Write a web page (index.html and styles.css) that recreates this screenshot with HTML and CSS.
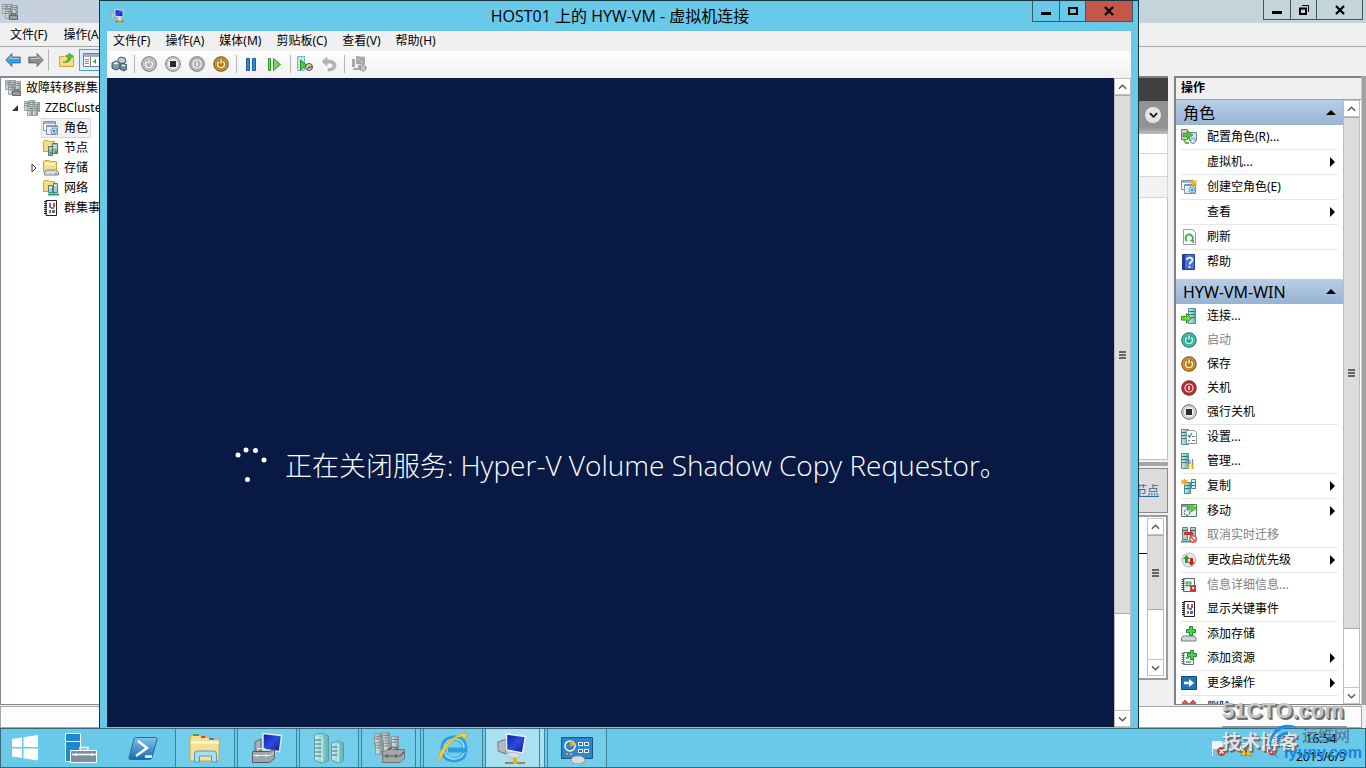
FILE: index.html
```html
<!DOCTYPE html>
<html lang="zh-CN">
<head>
    <meta charset="utf-8">
    <title>HOST01 上的 HYW-VM - 虚拟机连接</title>
    <link rel="stylesheet" href="styles.css">
</head>
<body>
    <!-- shared icons -->
    <svg class="sprite" aria-hidden="true">
        <defs>
            <linearGradient id="g-teal" x2="1"><stop offset="0" stop-color="#d5eff0"/><stop offset="1" stop-color="#5fb0b0"/></linearGradient>
            <linearGradient id="g-grey" x2="1"><stop offset="0" stop-color="#eee"/><stop offset="1" stop-color="#8d9898"/></linearGradient>
            <linearGradient id="g-screen" x2="1" y2="1"><stop offset="0" stop-color="#0a1aa0"/><stop offset=".5" stop-color="#2c4ce0"/><stop offset="1" stop-color="#0a1480"/></linearGradient>
            <linearGradient id="g-blue" x2="0" y2="1"><stop offset="0" stop-color="#7cc4ec"/><stop offset="1" stop-color="#1869b4"/></linearGradient>
        </defs>
        <symbol id="server" viewBox="0 0 6 10" preserveAspectRatio="none">
            <path d="M.5.5h5v9h-5z" fill="url(#g-grey)" stroke="#84918f" stroke-width=".8"/>
            <path d="M1 2.500h4M1 4.500h3" stroke="#677" stroke-width=".7"/><path d="M4 7h1v1H4z" fill="#2a9"/>
        </symbol>
        <symbol id="cluster" viewBox="0 0 16 16">
            <use href="#server" x="0" y="1" width="6" height="10"/><use href="#server" x="5" y="0" width="6" height="10"/>
            <use href="#server" x="10" y="2" width="6" height="10"/><use href="#server" x="3" y="6" width="6" height="10"/>
            <use href="#server" x="8" y="6" width="6" height="10"/>
        </symbol>
        <symbol id="cluster-tool" viewBox="0 0 16 16">
            <use href="#server" x="0" y="0" width="6" height="10"/><use href="#server" x="5" y="0" width="6" height="10"/>
            <use href="#server" x="10" y="1" width="6" height="10"/><use href="#server" x="3" y="5" width="6" height="10"/>
            <path d="M7.500 11.500h8v4h-8z" fill="#9aa0a0" stroke="#666"/><path d="M9.500 11V9.500h4V11" fill="none" stroke="#666"/>
        </symbol>
        <symbol id="roles" viewBox="0 0 16 16">
            <path d="M.5 1.500h12v9H.5z" fill="#fff" stroke="#8195a8"/><path d="M1 2h11v2H1z" fill="#9fb4c6"/>
            <path d="M3.500 5.500h11v9h-11z" fill="#e8f0f6" stroke="#8195a8"/><path d="M4 6h10v1H4z" fill="#7f99b0"/>
            <circle cx="11" cy="11" r="3" fill="#c7e0f4" stroke="#5d94c0" stroke-width="1.500" stroke-dasharray="1.500 .8"/><circle cx="11" cy="11" r="1.200" fill="#3f7cae"/>
        </symbol>
        <symbol id="roles-new" viewBox="0 0 16 16">
            <use href="#roles"/><path d="M12 0l1 2 3-1-1 3 1 2-3-.5-1.500 1.500-.5-2-2-1 2-1z" fill="#ffae1f"/>
        </symbol>
        <symbol id="nodes" viewBox="0 0 16 16">
            <path d="M.5 1.500l1-1h4l1 1h5v10H.5z" fill="#f5dd83" stroke="#c9a53b"/>
            <path d="M5.500 6.500h4v9h-4zM9.500 3.500h5v10h-5z" fill="#9cb3ab" stroke="#5d756c"/><path d="M10 5.500h4M10 7.500h4M6 8.500h3" stroke="#e6efe9"/><path d="M12 11h2v2h-2zM7 12h2v2H7z" fill="#2fa84a"/>
        </symbol>
        <symbol id="storage" viewBox="0 0 16 16">
            <path d="M.5 1.500l1-1h5l1 1h6v10H.5z" fill="#f5dd83" stroke="#c9a53b"/><path d="M2 4h10" stroke="#fff7cf" stroke-width="2"/>
            <path d="M3.500 10h9l3 2v3h-14v-3z" fill="#d7dada" stroke="#7b8282"/><path d="M12 13.500h2" stroke="#2fa84a"/>
        </symbol>
        <symbol id="network" viewBox="0 0 16 16">
            <path d="M.5 1.500l1-1h4l1 1h5v10H.5z" fill="#f5dd83" stroke="#c9a53b"/>
            <path d="M5.500 5.500h4v7h-4zM10.500 3.500h4v9h-4z" fill="#a8cfd2" stroke="#4e7f86"/><path d="M11 5.500h3M6 7.500h3" stroke="#fff"/>
            <path d="M5 14.500h11M10.500 12v3" stroke="#19a878" stroke-width="2"/>
        </symbol>
        <symbol id="events" viewBox="0 0 16 16">
            <path d="M3 .5h10.500v15H3z" fill="#fff" stroke="#222"/><path d="M2.500 1v14" stroke="#222" stroke-width="3" stroke-dasharray="1 1"/>
            <path d="M6 3h2v5H6zM8 7h3v2H8z" fill="#8b5fc0"/><path d="M10 3h2v4h-2zM6 10h2v3H6z" fill="#d04848"/><path d="M9 10h3v3H9z" fill="#5568a8"/>
        </symbol>
        <symbol id="arrow" viewBox="0 0 16 16">
            <path d="M.7 8L7 1.500V5h8.300v6H7v3.500z" fill="currentColor" stroke="#345" stroke-opacity=".6"/><path d="M3 7.500L6 4.500v2h8" fill="none" stroke="#fff" stroke-opacity=".5"/>
        </symbol>
        <symbol id="folder-up" viewBox="0 0 16 16">
            <path d="M.5 4.500h5l1-1h8v11H.5z" fill="#f5dd83" stroke="#c9a53b"/><path d="M4 10c4 0 5-2 5-5H7l3.500-4L14 5h-2c0 4-3 6-8 5z" fill="#5cc02f" stroke="#3d8f1e" stroke-width=".6"/>
        </symbol>
        <symbol id="panes" viewBox="0 0 18 16">
            <path d="M.5 1.500h17v13H.5z" fill="#fff" stroke="#77808a"/><path d="M1 2h16v3H1z" fill="#a4adb6"/><path d="M7.500 5v9" stroke="#77808a"/><path d="M2 7.500h4M2 9.500h4M2 11.500h4" stroke="#889"/><path d="M13 7v5l-3-2.500z" fill="#2da02d"/>
        </symbol>
        <symbol id="vmconnect" viewBox="0 0 16 16">
            <path d="M1 4h3v7H1z" fill="#c9cdd0" stroke="#888" stroke-width=".6"/><path d="M5 1.500l8 .8v6.500l-8-.5z" fill="url(#g-screen)" stroke="#d8dde2"/>
            <path d="M8 9h3v4H8z" fill="#ddd"/><path d="M5 13.500h9" stroke="#777" stroke-width="1.300"/><path d="M8.500 12h2.500v3H8.500z" fill="#e0ab2a"/>
        </symbol>
        <symbol id="cad" viewBox="0 0 16 16">
            <path d="M9 1l5 1 1 4-3 2-5-2V3z" fill="#b5ced8" stroke="#3f5c68"/><path d="M1 7l4-2 4 2v5l-4 2-4-2z" fill="#7e9ba6" stroke="#3a545f"/><path d="M9 9l3-2 4 2v4l-3 2-4-2z" fill="#6d8c98" stroke="#344e59"/><path d="M2 7.500l3 1 3-1.500-3-1z" fill="#e5f1f5"/><path d="M10 9.500l3 1 2-1-3-1z" fill="#e5f1f5"/>
        </symbol>
        <symbol id="power" viewBox="0 0 16 16">
            <circle cx="8" cy="8" r="7.500" fill="currentColor" stroke="#000" stroke-opacity=".35"/><circle cx="8" cy="8" r="5.800" fill="none" stroke="#fff" stroke-opacity=".25"/>
            <path d="M5.800 5.500a3.500 3.500 0 1 0 4.400 0M8 3.500v4" fill="none" stroke="#fff" stroke-width="1.300"/>
        </symbol>
        <symbol id="shutdown" viewBox="0 0 16 16">
            <circle cx="8" cy="8" r="7.500" fill="currentColor" stroke="#000" stroke-opacity=".35"/>
            <circle cx="8" cy="8" r="4" fill="none" stroke="#fff" stroke-opacity=".85" stroke-width="1.200"/><path d="M8 6v4" stroke="#fff" stroke-width="1.400"/>
        </symbol>
        <symbol id="turnoff" viewBox="0 0 16 16">
            <circle cx="8" cy="8" r="7.300" fill="#ececec" stroke="#666"/><circle cx="8" cy="8" r="5.700" fill="none" stroke="#bbb"/><path d="M5 5h6v6H5z" fill="#2b2b2b"/>
        </symbol>
        <symbol id="pause" viewBox="0 0 16 16"><path d="M3.500 2.500h3v12h-3zM9.500 2.500h3v12h-3z" fill="#2f86d2" stroke="#1761a4"/></symbol>
        <symbol id="play" viewBox="0 0 16 16"><path d="M1.500 2.500h2v12h-2zM6.500 2.500v12l7-6z" fill="#6fd85c" stroke="#2a9c27"/></symbol>
        <symbol id="snapshot" viewBox="0 0 16 16">
            <path d="M.5.500h7v14h-7z" fill="#bfe6e8" stroke="#4f9a9f" stroke-dasharray="2 1"/><path d="M3.500 4v10l6-5z" fill="#4fcb42" stroke="#25902a"/><circle cx="12" cy="11" r="3.500" fill="#d8cfb8" stroke="#594f3c"/><path d="M12 11h3M12 11l-1.500 2" stroke="#222"/>
        </symbol>
        <symbol id="revert" viewBox="0 0 16 16"><path d="M1 5.500L6 1v3c6 0 9 2 9 5.500S12 15 7 15v-2.500c3 0 5-1 5-3S9 7 6 7v3z" fill="#b4b4b4" stroke="#9a9a9a" stroke-width=".5"/></symbol>
        <symbol id="enhanced" viewBox="0 0 16 16"><path d="M5 0l9 1v8l-9-1zM1 3h3v8H1z" fill="#a8a8a8"/><path d="M6 2l6 5" stroke="#c8c8c8"/><path d="M7 9h3v3H7zM2 12h9v2H2z" fill="#aaa"/><circle cx="12" cy="12" r="2.800" fill="#c4c4c4" stroke="#929292" stroke-width="1.500" stroke-dasharray="2 1"/></symbol>
        <symbol id="configure" viewBox="0 0 16 16">
            <path d="M.5.500h6v10h-6z" fill="#cfd8cf" stroke="#6a7b6a"/><path d="M8.500 3.500h7v8h-7z" fill="#cfe0ee" stroke="#6a87a0"/><path d="M2 4h5V2l5 4-5 4V8H2z" fill="#56c13e" stroke="#2c8a22" stroke-width=".6"/><path d="M3 11l2 3h3" fill="none" stroke="#56c13e" stroke-width="2"/><circle cx="12" cy="12" r="2.500" fill="#e4eef5" stroke="#6a87a0"/>
        </symbol>
        <symbol id="refresh" viewBox="0 0 16 16">
            <path d="M2.500.500h9l3 3v12h-12z" fill="#fff" stroke="#9a9a9a"/><path d="M6 12a3.600 3.600 0 1 1 5-.5" fill="none" stroke="#47b04a" stroke-width="2"/><path d="M8.500 11h4.500v3.500z" fill="#47b04a"/>
        </symbol>
        <symbol id="help" viewBox="0 0 16 16">
            <path d="M1.500.500h12v15h-12z" fill="#4a70d8" stroke="#23408f"/><path d="M2 1h2v14H2z" fill="#1f3c94"/><path d="M6 6c0-3.500 5.500-3 5.500 0 0 2-3 2-3 4.500M8.500 12v1.800" fill="none" stroke="#fff" stroke-width="1.700"/>
        </symbol>
        <symbol id="host" viewBox="0 0 16 16">
            <path d="M.5.500h7v15h-7z" fill="url(#g-teal)" stroke="#4c9299"/><path d="M1 3.500h6M1 6.500h6M1 9.500h6" stroke="#2f7a86"/>
        </symbol>
        <symbol id="connect" viewBox="0 0 16 16"><use href="#host" x="7"/><path d="M.5 8.500h5v-3l5 4.800-5 4.800v-3h-5z" fill="#6fdd2f" stroke="#2f9322"/></symbol>
        <symbol id="settings" viewBox="0 0 16 16"><use href="#host"/><path d="M5.500 1.500h8l2 2v11h-10z" fill="#fff" stroke="#8e9aa3"/><path d="M7 6l1.500 2L11 4" fill="none" stroke="#1c9a86" stroke-width="1.300"/><path d="M11 7.500h3M7 11.500h2M11 11.500h3" stroke="#678"/></symbol>
        <symbol id="manage" viewBox="0 0 16 16"><use href="#host"/><path d="M6 7v3l1.500 1v5M9 7v3l-1.500 1" fill="none" stroke="#8b9196" stroke-width="1.300"/><path d="M7.500 11v5" stroke="#e3a71c" stroke-width="1.500"/><path d="M11.500 6v5" stroke="#888" stroke-width="1.300"/><path d="M11.500 10v6" stroke="#e3a71c" stroke-width="2"/></symbol>
        <symbol id="replicate" viewBox="0 0 16 16"><path d="M3.500 4.500h6v11h-6z" fill="url(#g-teal)" stroke="#3d8d96"/><path d="M10.500 1.500h4v9h-4z" fill="#d4eef2" stroke="#3d8d96"/><path d="M4 7.500h5M4 10.500h5M11 4.500h3M11 7.500h3" stroke="#2f7a86"/><path d="M3.500 0l1 2.500 2.500-1-1 2.500L7 6 4.500 5.500 3.500 8 2.500 5.500 0 6l1-2-1-2.500 2.500 1z" fill="#f3a52a"/></symbol>
        <symbol id="move" viewBox="0 0 16 16"><path d="M.5 1.500h15v12H.5z" fill="#e9f1f0" stroke="#527a6a"/><path d="M1 2h8v2H1z" fill="#7fa294"/><path d="M6 4h4V1l6 4-6 4V6.500H6z" fill="#62cf3b" stroke="#2d8f20" stroke-width=".6"/><circle cx="6" cy="9.500" r="2.700" fill="#fff" stroke="#4f86b3" stroke-dasharray="2 1" stroke-width="1.500"/></symbol>
        <symbol id="cancel-move" viewBox="0 0 16 16"><path d="M1.500.500h5v12h-5zM9.500.500h5v12h-5z" fill="#b6cdd2" stroke="#5e7a80"/><path d="M2 3.500h4M10 3.500h4" stroke="#455"/><path d="M0 14.500h10" stroke="#2f9a7a" stroke-width="2"/><path d="M3 5h6V3l4 3.500L9 10V8H3z" fill="#c9362c"/><circle cx="12" cy="12" r="3.200" fill="#fff" stroke="#d8554a" stroke-width="1.500"/><path d="M10 10l4 4" stroke="#d8554a" stroke-width="1.500"/></symbol>
        <symbol id="priority" viewBox="0 0 16 16"><circle cx="8" cy="8" r="7" fill="#e5e7e8" stroke="#b4b8ba"/><path d="M2 7l3.500-4L9 7H7v4H4V7z" fill="#27a03a"/><path d="M7 10l3.500 4 3.500-4h-2V6H9v4z" fill="#c6281f"/></symbol>
        <symbol id="info" viewBox="0 0 16 16"><path d="M2.500 1.500h11v13h-11z" fill="#f3f6f3" stroke="#567"/><path d="M2 2v12" stroke="#345" stroke-width="3" stroke-dasharray="1 1"/><path d="M6 4v6M9 4v6M4 6h7M4 8.500h7" stroke="#39ad45" stroke-width="1.200"/><path d="M9 8h6v7H9z" fill="#cc3d46"/><path d="M11 10h2v2h-2z" fill="#fff"/></symbol>
        <symbol id="add-storage" viewBox="0 0 16 16"><path d="M2 10h11l2 2v3H.5v-3z" fill="#d3d6d6" stroke="#777e7e"/><path d="M8.500.500h3v3h3v3h-3v3h-3v-3h-3v-3h3z" fill="#4fd14b" stroke="#1e8c28"/></symbol>
        <symbol id="add-resource" viewBox="0 0 16 16"><path d="M2.500 2.500h10v12h-10z" fill="#edf5f3" stroke="#567a78"/><path d="M2 3v11" stroke="#357a78" stroke-width="3" stroke-dasharray="1 1"/><path d="M5 7l1.500 2L8 6M5 12h5" fill="none" stroke="#265" /><path d="M9.500.500h3v3h3v3h-3v3h-3v-3h-3v-3h3z" fill="#4fd14b" stroke="#1e8c28"/></symbol>
        <symbol id="more" viewBox="0 0 16 16"><path d="M.5 1.500h15v13H.5z" fill="#2174b4" stroke="#124a7c"/><path d="M3 6.700h5V4l5 4-5 4V9.300H3z" fill="#fff"/></symbol>
        <symbol id="remove" viewBox="0 0 16 16"><path d="M1 3l3-3 4 4 4-4 3 3-4 5 4 5-3 3-4-4-4 4-3-3 4-5z" fill="#d9534a" stroke="#a83028" stroke-width=".6"/></symbol>
        <symbol id="chev-up" viewBox="0 0 10 6"><path d="M1 5l4-4 4 4" fill="none" stroke="#555" stroke-width="1.500"/></symbol>
        <symbol id="chev-down" viewBox="0 0 10 6"><path d="M1 1l4 4 4-4" fill="none" stroke="#555" stroke-width="1.500"/></symbol>
        <symbol id="chev-bold" viewBox="0 0 10 6"><path d="M1 1l4 4 4-4" fill="none" stroke="#111" stroke-width="2"/></symbol>
        <symbol id="win-min" viewBox="0 0 10 10"><path d="M0 6h10v3H0z" fill="#000"/></symbol>
        <symbol id="win-max" viewBox="0 0 10 10"><path d="M1 2h8v6H1z" fill="none" stroke="#000" stroke-width="2"/></symbol>
        <symbol id="win-restore" viewBox="0 0 10 10"><path d="M1 3.500h6V9H1z" fill="none" stroke="#000" stroke-width="2"/><path d="M3 .5h6.500V7" fill="none" stroke="#000"/></symbol>
        <symbol id="win-close" viewBox="0 0 10 10"><path d="M1 1l8 8M9 1L1 9" stroke="#000" stroke-width="2.300"/></symbol>
    </svg>

    <main class="desktop">
        <section class="console">
            <header class="console-title">
                <svg class="icon"><use href="#cluster-tool"/></svg>
                <div class="win-buttons">
                    <button class="win-btn" aria-label="最小化"><svg><use href="#win-min"/></svg></button>
                    <button class="win-btn mid" aria-label="还原"><svg><use href="#win-restore"/></svg></button>
                    <button class="win-btn close" aria-label="关闭"><svg><use href="#win-close"/></svg></button>
                </div>
            </header>
            <nav class="menu console-menu">
                <button>文件(F)</button>
                <button>操作(A)</button>
            </nav>
            <div class="console-tools">
                <button class="tool back" aria-label="后退"><svg class="icon"><use href="#arrow"/></svg></button>
                <button class="tool forward" aria-label="前进"><svg class="icon"><use href="#arrow"/></svg></button>
                <span class="tool-sep"></span>
                <button class="tool" aria-label="上一级"><svg class="icon"><use href="#folder-up"/></svg></button>
                <button class="tool toggled" aria-label="显示树"><svg class="icon"><use href="#panes"/></svg></button>
            </div>

            <div class="console-body">
                <ul class="tree">
                    <li><svg class="icon"><use href="#cluster-tool"/></svg><span>故障转移群集管理器</span></li>
                    <li class="level-1"><svg class="twisty" viewBox="0 0 8 8"><path d="M7 1v6H1z" fill="#333"/></svg><svg class="icon"><use href="#cluster"/></svg><span>ZZBCluster</span></li>
                    <li class="level-2"><span class="selected"><svg class="icon"><use href="#roles"/></svg><span>角色</span></span></li>
                    <li class="level-2"><svg class="icon"><use href="#nodes"/></svg><span>节点</span></li>
                    <li class="level-2 expandable"><svg class="twisty" viewBox="0 0 8 8"><path d="M2 0v8l4-4z" fill="#fff" stroke="#333"/></svg><svg class="icon"><use href="#storage"/></svg><span>存储</span></li>
                    <li class="level-2"><svg class="icon"><use href="#network"/></svg><span>网络</span></li>
                    <li class="level-2"><svg class="icon"><use href="#events"/></svg><span>群集事件</span></li>
                </ul>

                <div class="center">
                    <div class="center-head"></div>
                    <div class="center-filter"><button class="round" aria-label="展开"><svg><use href="#chev-bold"/></svg></button></div>
                    <div class="grid-row"></div>
                    <div class="grid-row tall"></div>
                    <div class="grid-row shaded"></div>
                    <div class="grid-rest"></div>
                    <div class="splitter"></div>
                    <div class="owner"><a href="#">节点</a></div>
                    <div class="details">
                        <div class="details-line"></div>
                        <div class="scroll">
                            <button aria-label="向上"><svg><use href="#chev-up"/></svg></button>
                            <div class="thumb"></div>
                            <div class="track"></div>
                            <button aria-label="向下"><svg><use href="#chev-down"/></svg></button>
                        </div>
                    </div>
                </div>

                <aside class="actions">
                    <h2>操作</h2>
                    <div class="actions-body">
                        <div class="actions-list">
                            <h3>角色<i class="fold"></i></h3>
                            <button class="action line"><svg class="icon"><use href="#configure"/></svg>配置角色(R)...</button>
                            <button class="action line more"><svg class="icon"></svg>虚拟机...</button>
                            <button class="action line"><svg class="icon"><use href="#roles-new"/></svg>创建空角色(E)</button>
                            <button class="action line more"><svg class="icon"></svg>查看</button>
                            <button class="action line"><svg class="icon"><use href="#refresh"/></svg>刷新</button>
                            <button class="action last"><svg class="icon"><use href="#help"/></svg>帮助</button>
                            <h3>HYW-VM-WIN<i class="fold"></i></h3>
                            <button class="action"><svg class="icon"><use href="#connect"/></svg>连接...</button>
                            <button class="action" disabled><svg class="icon start"><use href="#power"/></svg>启动</button>
                            <button class="action"><svg class="icon save"><use href="#power"/></svg>保存</button>
                            <button class="action"><svg class="icon stop"><use href="#shutdown"/></svg>关机</button>
                            <button class="action line"><svg class="icon"><use href="#turnoff"/></svg>强行关机</button>
                            <button class="action"><svg class="icon"><use href="#settings"/></svg>设置...</button>
                            <button class="action line"><svg class="icon"><use href="#manage"/></svg>管理...</button>
                            <button class="action line more"><svg class="icon"><use href="#replicate"/></svg>复制</button>
                            <button class="action more"><svg class="icon"><use href="#move"/></svg>移动</button>
                            <button class="action line" disabled><svg class="icon"><use href="#cancel-move"/></svg>取消实时迁移</button>
                            <button class="action line more"><svg class="icon"><use href="#priority"/></svg>更改启动优先级</button>
                            <button class="action" disabled><svg class="icon"><use href="#info"/></svg>信息详细信息...</button>
                            <button class="action line"><svg class="icon"><use href="#events"/></svg>显示关键事件</button>
                            <button class="action"><svg class="icon"><use href="#add-storage"/></svg>添加存储</button>
                            <button class="action line more"><svg class="icon"><use href="#add-resource"/></svg>添加资源</button>
                            <button class="action line more"><svg class="icon"><use href="#more"/></svg>更多操作</button>
                            <button class="action"><svg class="icon"><use href="#remove"/></svg>删除</button>
                        </div>
                        <div class="scroll">
                            <button aria-label="向上"><svg><use href="#chev-up"/></svg></button>
                            <div class="thumb"></div>
                            <div class="track"></div>
                            <button aria-label="向下"><svg><use href="#chev-down"/></svg></button>
                        </div>
                    </div>
                </aside>
            </div>
            <footer class="console-status"></footer>
        </section>

        <section class="vm">
            <header class="vm-title">
                <svg class="icon"><use href="#vmconnect"/></svg>
                <h1>HOST01 上的 HYW-VM - 虚拟机连接</h1>
                <div class="win-buttons">
                    <button class="win-btn" aria-label="最小化"><svg><use href="#win-min"/></svg></button>
                    <button class="win-btn mid" aria-label="最大化"><svg><use href="#win-max"/></svg></button>
                    <button class="win-btn close" aria-label="关闭"><svg><use href="#win-close"/></svg></button>
                </div>
            </header>
            <nav class="menu vm-menu">
                <button>文件(F)</button>
                <button>操作(A)</button>
                <button>媒体(M)</button>
                <button>剪贴板(C)</button>
                <button>查看(V)</button>
                <button>帮助(H)</button>
            </nav>
            <div class="vm-tools">
                <button class="tool" aria-label="Ctrl+Alt+Del"><svg class="icon"><use href="#cad"/></svg></button>
                <span class="tool-sep"></span>
                <button class="tool off" aria-label="启动"><svg class="icon"><use href="#power"/></svg></button>
                <button class="tool" aria-label="强行关机"><svg class="icon"><use href="#turnoff"/></svg></button>
                <button class="tool off" aria-label="关机"><svg class="icon"><use href="#shutdown"/></svg></button>
                <button class="tool save" aria-label="保存"><svg class="icon"><use href="#power"/></svg></button>
                <span class="tool-sep"></span>
                <button class="tool" aria-label="暂停"><svg class="icon"><use href="#pause"/></svg></button>
                <button class="tool" aria-label="重置"><svg class="icon"><use href="#play"/></svg></button>
                <span class="tool-sep"></span>
                <button class="tool" aria-label="快照"><svg class="icon"><use href="#snapshot"/></svg></button>
                <button class="tool" aria-label="还原"><svg class="icon"><use href="#revert"/></svg></button>
                <span class="tool-sep"></span>
                <button class="tool" aria-label="增强会话"><svg class="icon"><use href="#enhanced"/></svg></button>
            </div>
            <div class="vm-view">
                <div class="vm-screen">
                    <svg class="spinner" viewBox="0 0 36 40">
                        <g fill="#fff"><circle cx="4" cy="9" r="2.500"/><circle cx="12" cy="4" r="2.500"/><circle cx="21.500" cy="4.500" r="2.500"/><circle cx="30" cy="14" r="2.500"/><circle cx="13.500" cy="33.500" r="2.500"/></g>
                    </svg>
                    <p>正在关闭服务: <span>Hyper-V Volume Shadow Copy Requestor</span>。</p>
                </div>
                <div class="scroll">
                    <button aria-label="向上"><svg><use href="#chev-up"/></svg></button>
                    <div class="thumb"></div>
                    <div class="track"></div>
                    <button aria-label="向下"><svg><use href="#chev-down"/></svg></button>
                </div>
            </div>
        </section>
    </main>

    <footer class="taskbar">
        <button class="task start-btn" aria-label="开始">
            <svg viewBox="0 0 32 32"><path d="M3 7l10-1.500V15H3zM14.500 5.300L29 3v12H14.500zM3 16.500h10V26L3 24.500zM14.500 16.500H29v12l-14.500-2.200z" fill="#fff"/></svg>
        </button>
        <button class="task pinned" aria-label="服务器管理器">
            <svg viewBox="0 0 32 32"><path d="M.5 1.500h15v28H.5z" fill="#1f86d0" stroke="#fff"/><path d="M1 9.500h14" stroke="#fff"/><path d="M5.500 18.500h26v12h-26z" fill="#7b8f9d" stroke="#fff"/><path d="M15 18v-2.500h8V18M7 22.500h24M11 21v3M27 21v3" fill="none" stroke="#fff" stroke-width="1.300"/></svg>
        </button>
        <button class="task pinned" aria-label="PowerShell">
            <svg viewBox="0 0 32 32"><path d="M8.500 5.500h20q2 0 1.500 2l-5 18q-.5 2-2.500 2h-19q-2 0-1.500-2l5-18q.5-2 1.500-2z" fill="url(#g-blue)" stroke="#2a6d9f"/><path d="M11 9l9 7-11 8M18 24.500h7" fill="none" stroke="#fff" stroke-width="2.500"/></svg>
        </button>
        <button class="task open" aria-label="文件资源管理器">
            <svg viewBox="0 0 32 32"><path d="M1 6l2-3h8l2 2h8l2 2h7v22H1z" fill="#f6df92" stroke="#c8a546"/><path d="M4 3h6" stroke="#3da943" stroke-width="2"/><path d="M12 5h4" stroke="#d8432e" stroke-width="2"/><path d="M20 7h5" stroke="#3f87cc" stroke-width="2"/><path d="M2 10.500h28" stroke="#fff8d6" stroke-width="2"/><path d="M5.500 30v-8q0-3 3-3h16q3 0 3 3v8h-5v-6h-12v6z" fill="#a7dff2" stroke="#4a9dc0"/></svg>
        </button>
        <button class="task open" aria-label="Hyper-V 管理器">
            <svg viewBox="0 0 32 32"><path d="M4 10l6-3v12H4z" fill="#a9aeb2" stroke="#666"/><path d="M12 1.500l18.500 2-2 16-16.500-2z" fill="url(#g-screen)" stroke="#e2e6ea" stroke-width="1.500"/><path d="M13 18l12 2v5H13z" fill="#c6cacc"/><path d="M1.500 19.500h17l5-2v9l-5 4h-17z" fill="#9ea4a8" stroke="#555d62"/><path d="M7 19v-2.500h7V19M2 23.500h17l4-3M6 22v3M15 22v3" fill="none" stroke="#eee"/></svg>
        </button>
        <button class="task open" aria-label="服务器">
            <svg viewBox="0 0 32 32"><path d="M1.500 3l8-2 6 3v25l-7 2-7-3z" fill="url(#g-teal)" stroke="#5c9ea6"/><path d="M18.500 11l7-2 5 2v18l-6 2-6-3z" fill="url(#g-teal)" stroke="#5c9ea6"/><path d="M2 8h7M2 12h7M2 16h7M2 20h7M2 24h7M19 15h6M19 19h6M19 23h6" stroke="#2f7e8a"/><path d="M9 5v25M25 12v18" stroke="#e8fafa"/></svg>
        </button>
        <button class="task open stacked" aria-label="故障转移群集管理器">
            <svg viewBox="0 0 32 32"><use href="#server" x="1" y="1" width="8" height="13"/><use href="#server" x="9" y="0" width="8" height="13"/><use href="#server" x="18" y="4" width="8" height="14"/><use href="#server" x="2" y="10" width="8" height="13"/><use href="#server" x="10" y="8" width="8" height="13"/><path d="M9.500 20.500l5-3h17v9l-5 4h-17z" fill="#a3a8ab" stroke="#6f767a"/><path d="M15 18q5-6 10 0M10 24h17l4-4M14 22v4M23 22v4" fill="none" stroke="#555" stroke-width="1.200"/></svg>
        </button>
        <button class="task open" aria-label="Internet Explorer">
            <svg viewBox="0 0 32 32"><path d="M28 21q-3 7-11 7Q6 27 6 17T17 6q11 0 11 12H11" fill="none" stroke="#2b9fe0" stroke-width="5"/><path d="M27 21q-3 6-10 6-10-1-10-10T17 7q10 0 10 9" fill="none" stroke="#a8e2fb" stroke-width="1.500"/><path d="M3 30Q-2 25 9 12 22 0 28 1q3 2 0 7-1-4-6-3Q13 9 7 20q-4 8-4 10z" fill="#f5cf3a" stroke="#c79d1b" stroke-width=".6"/></svg>
        </button>
        <button class="task open active stacked" aria-label="虚拟机连接">
            <svg viewBox="0 0 32 32"><path d="M1 10l8-3v15l-8-3z" fill="#b4b9bc" stroke="#777"/><path d="M9.500 2l19 2.500-3 16.500-16-3z" fill="url(#g-screen)" stroke="#eceff1" stroke-width="1.500"/><path d="M10 21q7-2 14 1-1 4-7 4-6 0-7-5z" fill="#d9dcde" stroke="#a9adb0" stroke-width=".6"/><path d="M8 31h20" stroke="#8a6d1a" stroke-width="1.500"/><path d="M16 26h4v6h-4z" fill="#eab12c"/></svg>
        </button>
        <button class="task open" aria-label="控制面板">
            <svg viewBox="0 0 32 32"><path d="M.500 5.500h31v21H.5z" fill="#2f86c8" stroke="#165585"/><circle cx="9" cy="14" r="5" fill="none" stroke="#fff" stroke-width="1.500"/><path d="M9 14V9a5 5 0 0 1 5 5z" fill="#f5a623"/><path d="M17.500 10.500h4v3h-4zM23.500 10.500h4v3h-4zM17.500 17.500h4v3h-4zM23.500 17.500h4v3h-4z" fill="#1c6cab" stroke="#fff"/><path d="M5 22h2M9 22h2" stroke="#f5a623" stroke-width="2"/><ellipse cx="17" cy="28" rx="7" ry="4" fill="#d8dcdf" stroke="#8f979c"/></svg>
        </button>

        <div class="tray">
            <svg class="icon" viewBox="0 0 16 16"><path d="M1.500 1v15M2 1.500h9v7H2" fill="#e8f6fc" stroke="#fff"/><circle cx="10.500" cy="11.500" r="4.500" fill="#d8362c"/><path d="M8.500 9.500l4 4M12.500 9.500l-4 4" stroke="#fff" stroke-width="1.300"/></svg>
            <svg class="icon" viewBox="0 0 16 16"><path d="M4.500 3.500h10v7h-10zM1.500 1.500v8M8 13h5" fill="#8fd2ee" stroke="#fff"/><path d="M10 6l5.500 9.500h-11z" fill="#f7c51e" stroke="#a37c09" stroke-width=".6"/><path d="M10 9v3.500M10 13.500v1" stroke="#222" stroke-width="1.300"/></svg>
            <svg class="icon" viewBox="0 0 16 16"><path d="M1 6h3l4-4v12l-4-4H1z" fill="#fff"/><circle cx="11.500" cy="11" r="4.500" fill="#d8362c"/><path d="M9.500 9l4 4M13.500 9l-4 4" stroke="#fff" stroke-width="1.300"/></svg>
            <div class="clock"><time>16:54</time><span>2015/6/9</span></div>
        </div>
    </footer>

    <div class="marks">
        <div class="mark-cto"><b>51CTO.com</b><span>技术博客</span></div>
        <svg class="mark-ring" viewBox="0 0 40 40"><path d="M36 7A18 18 0 1 0 18 38Q4 26 12 15 20 4 36 7z" fill="#1d8fe0"/><path d="M16 21q0-8 10-9" fill="none" stroke="#1d8fe0" stroke-width="3"/></svg>
        <div class="mark-iyunv"><span>运维网</span><b>iyunv.com</b></div>
    </div>
</body>
</html>
```
FILE: styles.css
```css
* {
    box-sizing: border-box;
}

body {
    margin: 0;
    height: 100vh;
    display: flex;
    flex-direction: column;
    overflow: hidden;
    position: relative;
    font-family: "Noto Sans", "Noto Sans CJK SC", sans-serif;
    font-size: 12px;
    line-height: 16px;
    color: #000;
    background-color: #68c9e9;
}

button {
    font: inherit;
    color: inherit;
    background: none;
    border: 0;
    padding: 0;
}

h1, h2, h3, p, ul {
    margin: 0;
    padding: 0;
    font-weight: normal;
}

.sprite {
    position: absolute;
    width: 0;
    height: 0;
}

.icon {
    width: 16px;
    height: 16px;
    flex: none;
    display: block;
}

.desktop {
    flex: 1;
    min-height: 0;
    position: relative;
    display: flex;
}

/* window buttons */
.win-buttons {
    display: flex;
    align-self: flex-start;
}

.win-btn {
    width: 28px;
    height: 20px;
    border: 1px solid #42565e;
    border-top: 0;
    display: flex;
    align-items: center;
    justify-content: center;
}

.win-btn svg {
    width: 10px;
    height: 10px;
}

.win-btn.mid {
    width: 26px;
    border-left: 0;
}

.win-btn.close {
    width: 46px;
    border-left: 0;
}

.menu {
    display: flex;
    align-items: center;
    background-color: #f0f0f0;
}

.tool-sep {
    width: 1px;
    height: 18px;
    background-color: #b5b5b5;
}

/* scrollbars */
.scroll {
    width: 17px;
    flex: none;
    display: flex;
    flex-direction: column;
    background-color: #fff;
    border: solid #bcbcbc;
    border-width: 0 1px;
}

.scroll button {
    height: 17px;
    flex: none;
    display: flex;
    align-items: center;
    justify-content: center;
    border: 1px solid #c4c4c4;
    border-width: 1px 0;
}

.scroll svg {
    width: 9px;
    height: 6px;
}

.thumb {
    flex: 54;
    background-color: #dcdcdc;
    border: 1px solid #aaa;
    border-width: 1px 0;
    display: flex;
    align-items: center;
    justify-content: center;
}

.thumb::before {
    content: "";
    width: 7px;
    height: 8px;
    background: repeating-linear-gradient(#666 0 2px, transparent 2px 3px);
}

.track {
    flex: 10;
}

/* cluster console */
.console {
    flex: 1;
    display: flex;
    flex-direction: column;
    min-width: 0;
    background-color: #f0f0f0;
}

.console-title {
    height: 23px;
    display: flex;
    justify-content: space-between;
    align-items: center;
    padding: 0 3px 0 2px;
    background: linear-gradient(90deg, #c6d0de, #c3d5da);
}

.console-menu {
    height: 24px;
    padding: 0 10px;
    gap: 16px;
    border-bottom: 1px solid #a6a6a6;
}

.console-tools {
    height: 29px;
    display: flex;
    align-items: center;
    padding: 0 5px 3px;
    gap: 7px;
}

.console-tools .tool-sep {
    height: 22px;
    margin: 0 3px 0 -3px;
}

.back {
    color: #35a0e8;
}

.forward {
    color: #8d8d8d;
    transform: scaleX(-1);
}

.toggled {
    height: 22px;
    padding: 2px 3px;
    margin-left: -3px;
    border: 1px solid #4aa3d8;
    background-color: #d9ecf7;
}

.toggled .icon {
    width: 18px;
}

.console-body {
    flex: 1;
    min-height: 0;
    display: flex;
    border-right: 4px solid #a2a2a2;
}

.tree {
    width: 240px;
    flex: none;
    list-style: none;
    background-color: #fff;
    border: 1px solid #828790;
    border-width: 2px 1px 1px;
}

.tree li {
    height: 20px;
    display: flex;
    align-items: center;
    gap: 5px;
    padding-left: 4px;
    white-space: nowrap;
}

.twisty {
    width: 8px;
    height: 8px;
}

.tree .level-1 {
    padding-left: 10px;
}

.tree .level-2 {
    padding-left: 42px;
}

.tree .expandable {
    padding-left: 29px;
}

.selected {
    display: flex;
    align-items: center;
    gap: 5px;
    height: 20px;
    margin-left: -2px;
    padding: 0 2px 0 1px;
    background-color: #f2f2f2;
    border: 1px solid #dadada;
}

/* middle pane, mostly hidden behind the vm window */
.center {
    flex: 1;
    display: flex;
    flex-direction: column;
    margin-right: 6px;
    border-top: 2px solid #828282;
}

.center-head {
    height: 23px;
    background-color: #404040;
}

.center-filter {
    height: 33px;
    display: flex;
    justify-content: flex-end;
    align-items: center;
    padding: 0 7px 6px;
    background: linear-gradient(#929292 80%, #bdbdbd);
}

.round {
    width: 16px;
    height: 16px;
    border-radius: 50%;
    background-color: #e4e4e4;
    display: flex;
    align-items: center;
    justify-content: center;
}

.round svg {
    width: 9px;
    height: 6px;
}

.grid-row {
    height: 20px;
    background-color: #fff;
    border: 1px solid #d5d5d5;
    border-width: 0 1px 1px 0;
}

.grid-row.tall {
    height: 23px;
}

.grid-row.shaded {
    height: 21px;
    background-color: #f2f2f2;
}

.grid-rest {
    flex: 1;
    background-color: #fff;
    border: 1px solid #c0c0c0;
    border-width: 0 1px 1px 0;
}

.splitter {
    height: 4px;
    margin: 2px 0;
    background-color: #a5a5a5;
}

.owner {
    height: 45px;
    display: flex;
    align-items: center;
    justify-content: flex-end;
    padding-right: 8px;
    background-color: #dcdcdc;
    border: 1px solid #8a8a8a;
}

.owner a {
    color: #2a6ab0;
}

.details {
    height: 165px;
    margin: 2px 0 25px;
    padding: 1px 2px 2px 1px;
    display: flex;
    background-color: #fff;
    border: 2px solid #9a9aa2;
}

.details-line {
    flex: 1;
    height: 36px;
    border-bottom: 1px solid #000;
}

.details .thumb {
    flex: 3;
}

.details .track {
    flex: 2;
}

/* actions pane */
.actions {
    width: 188px;
    flex: none;
    display: flex;
    flex-direction: column;
    background-color: #fff;
    border: 2px solid #828282;
    border-right: 1px solid #c8c8c8;
    border-bottom: 1px solid #828282;
}

.actions h2 {
    height: 22px;
    flex: none;
    padding: 2px 5px;
    font-size: 12px;
    font-weight: bold;
    background-color: #f0f0f0;
    border-bottom: 1px solid #a0a0a0;
}

.actions-body {
    flex: 1;
    min-height: 0;
    display: flex;
    padding-right: 1px;
}

.actions-list {
    flex: 1;
    overflow: hidden;
}

.actions h3 {
    height: 25px;
    padding: 0 7px;
    display: flex;
    align-items: center;
    justify-content: space-between;
    font-size: 16px;
    background: linear-gradient(#b8cee6, #98b3d2);
}

.fold {
    border: 5px solid transparent;
    border-top: 0;
    border-bottom-color: #000;
}

.action {
    display: flex;
    align-items: center;
    gap: 10px;
    width: calc(100% - 5px);
    height: 24px;
    padding: 0 0 1px 5px;
    text-align: left;
    white-space: nowrap;
}

.action:disabled {
    color: #808080;
}

.action.line {
    height: 25px;
    background: linear-gradient(#e6e6e6, #e6e6e6) 5px 100% / 100% 1px no-repeat;
}

.action.last {
    margin-bottom: 5px;
}

.action.more::after {
    content: "";
    margin-left: auto;
    margin-right: 3px;
    border: 5px solid transparent;
    border-right: 0;
    border-left-color: #000;
}

.start {
    color: #1fb096;
}

.save {
    color: #b87a12;
}

.stop {
    color: #b92a2a;
}

.actions .thumb {
    flex: 88;
}

.console-status {
    height: 22px;
    margin: 1px 4px 0 0;
    background-color: #fdfdfd;
    border: 1px solid #a6a6a6;
}

/* vm connection window */
.vm {
    position: absolute;
    left: 99px;
    right: 227px;
    top: 0;
    bottom: 0;
    display: flex;
    flex-direction: column;
    padding: 0 7px 1px;
    background-color: #68c9e9;
    border: 1px solid #17343f;
    border-bottom: 0;
}

.vm-title {
    height: 30px;
    flex: none;
    display: flex;
    align-items: center;
    margin-right: -2px;
    padding-left: 3px;
}

.vm-title h1 {
    flex: 1;
    padding-left: 82px;
    font-family: "Open Sans", "Noto Sans CJK SC", sans-serif;
    font-size: 16px;
    line-height: 20px;
    text-align: center;
}

.vm-title .win-btn {
    height: 21px;
}

.vm-title .win-btn.close {
    width: 47px;
    background-color: #c4564c;
}

.vm-menu {
    height: 20px;
    flex: none;
    padding: 0 6px;
    gap: 15px;
}

.vm-tools {
    height: 27px;
    flex: none;
    display: flex;
    align-items: center;
    padding: 0 4px 1px;
    gap: 8px;
    background: linear-gradient(#fdfdfd, #f1f1f1);
}

.vm-tools .tool-sep {
    margin: 0 -2px 0 -1px;
}

.off {
    color: #b2b2b2;
}

.vm-view {
    flex: 1;
    min-height: 0;
    display: flex;
}

.vm-screen {
    flex: 1;
    display: flex;
    align-items: center;
    gap: 15px;
    padding: 126px 0 0 127px;
    background-color: #081944;
    color: #fff;
}

.spinner {
    width: 36px;
    height: 40px;
}

.vm-screen p {
    font-family: "Open Sans", "Noto Sans CJK SC", sans-serif;
    font-size: 27px;
    line-height: 36px;
    font-weight: 300;
    white-space: nowrap;
}

.vm-screen p span {
    font-size: 28px;
}

/* taskbar */
.taskbar {
    height: 40px;
    flex: none;
    display: flex;
    gap: 2px;
    background-color: #68c9e9;
    border: 1px solid #3a6878;
}

.task {
    width: 60px;
    height: 38px;
    display: flex;
    align-items: center;
    justify-content: center;
}

.task svg {
    width: 32px;
    height: 32px;
}

.start-btn {
    width: 48px;
}

.open {
    border: 1px solid #3f8299;
    border-width: 0 1px;
    background-color: #74cdea;
}

.active {
    background-color: #a9e1f3;
}

.stacked {
    padding-right: 5px;
    background-image: linear-gradient(#3f8299, #3f8299);
    background-size: 1px 100%;
    background-position: 53px 0;
    background-repeat: no-repeat;
}

.tray {
    margin-left: auto;
    display: flex;
    align-items: center;
    gap: 9px;
    padding-right: 19px;
}

.clock {
    display: flex;
    flex-direction: column;
    align-items: center;
    line-height: 18px;
    margin-left: 10px;
}

/* watermarks stamped over the corner */
.marks {
    position: absolute;
    right: 0;
    bottom: 0;
    width: 144px;
    height: 72px;
    pointer-events: none;
}

.mark-cto {
    color: #c4c4c4;
    text-shadow: 1px 1px 0 #666, 2px 2px 0 #777;
}

.mark-cto b {
    display: block;
    font-family: "Liberation Sans", sans-serif;
    font-size: 22px;
    line-height: 30px;
    width: 125px;
    border-bottom: 2px solid #8b95a0;
}

.mark-cto span {
    font-size: 19px;
    line-height: 28px;
    font-weight: bold;
    color: #e0e4e6;
}

.mark-ring {
    position: absolute;
    left: 40px;
    top: 25px;
    width: 40px;
    height: 40px;
}

.mark-iyunv {
    position: absolute;
    right: 4px;
    bottom: 6px;
    display: flex;
    flex-direction: column;
    align-items: flex-end;
}

.mark-iyunv span {
    padding-right: 12px;
    font-size: 16px;
    line-height: 18px;
    color: #4d7488;
}

.mark-iyunv b {
    font-family: "Liberation Sans", sans-serif;
    font-size: 16px;
    line-height: 18px;
    color: #1686e0;
}
```
